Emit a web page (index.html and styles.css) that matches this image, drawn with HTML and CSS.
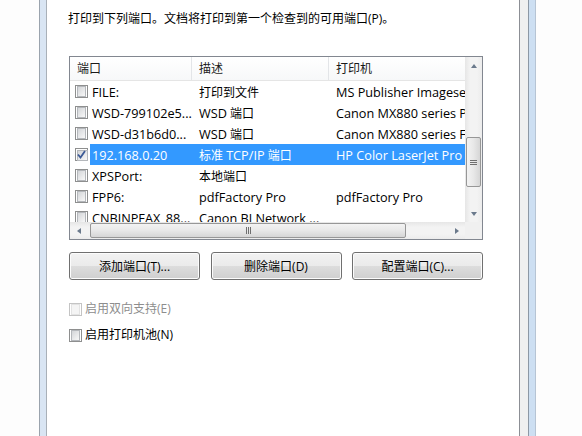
FILE: index.html
```html
<!DOCTYPE html>
<html lang="zh-CN">
<head>
<meta charset="utf-8">
<title>端口</title>
<link rel="stylesheet" href="styles.css">
</head>
<body>
<div class="screen">
  <div class="gutter-left"></div>
  <div class="frame-left"></div>
  <div class="panel">
    <p class="intro">打印到下列端口。文档将打印到第一个检查到的可用端口(P)。</p>
    <div class="listbox">
      <div class="list-top">
        <div class="list-view">
          <div class="header">
            <div class="hcell h1">端口</div>
            <div class="hcell h2">描述</div>
            <div class="hcell h3">打印机</div>
          </div>
          <div class="rows">
            <div class="row"><span class="cb-cell"><span class="cb"></span></span><span class="cells"><span class="c1"><span class="l">FILE:</span></span><span class="c2">打印到文件</span><span class="c3"><span class="l">MS Publisher Imagesetter</span></span></span></div>
            <div class="row"><span class="cb-cell"><span class="cb"></span></span><span class="cells"><span class="c1"><span class="l">WSD-799102e5...</span></span><span class="c2"><span class="l">WSD</span> 端口</span><span class="c3"><span class="l">Canon MX880 series Printer</span></span></span></div>
            <div class="row"><span class="cb-cell"><span class="cb"></span></span><span class="cells"><span class="c1"><span class="l">WSD-d31b6d0...</span></span><span class="c2"><span class="l">WSD</span> 端口</span><span class="c3"><span class="l">Canon MX880 series FAX</span></span></span></div>
            <div class="row"><span class="cb-cell"><span class="cb checked"><svg viewBox="0 0 9 9" width="9" height="9"><path d="M1 4.5 L3.5 7.5 L8 1" fill="none" stroke="#3c5a96" stroke-width="1.8"/></svg></span></span><span class="cells selected"><span class="c1"><span class="l">192.168.0.20</span></span><span class="c2">标准 <span class="l">TCP/IP</span> 端口</span><span class="c3"><span class="l">HP Color LaserJet Pro MFP</span></span></span></div>
            <div class="row"><span class="cb-cell"><span class="cb"></span></span><span class="cells"><span class="c1"><span class="l">XPSPort:</span></span><span class="c2">本地端口</span><span class="c3"></span></span></div>
            <div class="row"><span class="cb-cell"><span class="cb"></span></span><span class="cells"><span class="c1"><span class="l">FPP6:</span></span><span class="c2"><span class="l">pdfFactory Pro</span></span><span class="c3"><span class="l">pdfFactory Pro</span></span></span></div>
            <div class="row"><span class="cb-cell"><span class="cb"></span></span><span class="cells"><span class="c1"><span class="l">CNBJNPFAX_88...</span></span><span class="c2"><span class="l">Canon BJ Network ...</span></span><span class="c3"></span></span></div>
          </div>
        </div>
        <div class="vscroll">
          <div class="sbtn"><span class="arr up"></span></div>
          <div class="vtrack"><div class="vthumb"><span class="grip-h"></span></div></div>
          <div class="sbtn"><span class="arr down"></span></div>
        </div>
      </div>
      <div class="list-bottom">
        <div class="hscroll">
          <div class="sbtn"><span class="arr left"></span></div>
          <div class="htrack"><div class="hthumb"><span class="grip-v"></span></div></div>
          <div class="sbtn"><span class="arr right"></span></div>
        </div>
        <div class="corner"></div>
      </div>
    </div>
    <div class="buttons">
      <button class="btn">添加端口(T)...</button>
      <button class="btn">删除端口(D)</button>
      <button class="btn">配置端口(C)...</button>
    </div>
    <label class="check disabled"><span class="cb"></span><span>启用双向支持(E)</span></label>
    <label class="check"><span class="cb"></span><span>启用打印机池(N)</span></label>
  </div>
  <div class="frame-right-gray"></div>
  <div class="frame-right"></div>
  <div class="gutter-right"></div>
</div>
</body>
</html>
```

FILE: styles.css
```css
* { box-sizing: border-box; }
html, body { margin: 0; padding: 0; }
body {
  background: #ffffff;
  font-family: "Open Sans", "Noto Sans CJK SC", sans-serif;
  font-size: 12px;
  color: #000;
  overflow: hidden;
}
.screen { display: flex; height: 436px; width: 582px; }
.gutter-left { width: 39px; background: #fdfdfd; }
.frame-left {
  width: 8px;
  background: #d9e5f3;
  border-left: 1px solid #9aa3ad;
  border-right: 1px solid #a9b0b8;
}
.panel {
  width: 473px;
  background: #ffffff;
  border-right: 1px solid #8c8f95;
  padding: 11px 0 0 22px;
  display: flex;
  flex-direction: column;
  align-items: flex-start;
}
.frame-right-gray { width: 8px; background: #f0f0f0; }
.frame-right {
  width: 8px;
  background: #cddff2;
  border-left: 1px solid #8d98a5;
  border-right: 1px solid #b6c4d4;
}
.gutter-right { flex: 1; background: #fdfdfd; }

.intro {
  margin: 0 0 29px -1px;
  line-height: 16px;
  white-space: nowrap;
  color: #000;
}

.listbox {
  width: 414px;
  height: 184px;
  border: 1px solid #828790;
  display: flex;
  flex-direction: column;
  background: #fff;
}
.list-top { display: flex; height: 165px; }
.list-view { width: 395px; overflow: hidden; display: flex; flex-direction: column; }
.header {
  display: flex;
  height: 24px;
  flex: none;
  background: linear-gradient(#ffffff, #f7f8f9);
  border-bottom: 1px solid #e5e5e5;
}
.hcell {
  padding-left: 7px;
  line-height: 23px;
  color: #1a1a1a;
  white-space: nowrap;
}
.h1 { width: 122px; border-right: 1px solid #e3e5e8; }
.h2 { width: 137px; border-right: 1px solid #e3e5e8; }
.h3 { flex: 1; }

.rows { flex: 1; overflow: hidden; }
.row { display: flex; height: 21px; align-items: center; }
.cb-cell { width: 20px; padding-left: 5px; display: flex; align-items: center; }
.cells {
  flex: 1;
  min-width: 0;
  height: 100%;
  display: flex;
  align-items: center;
  white-space: nowrap;
}
.cells.selected { background: #3399ff; color: #fff; }
.c1 { width: 102px; padding-left: 2px; flex: none; overflow: hidden; }
.c2 { width: 137px; padding-left: 7px; flex: none; overflow: hidden; }
.c3 { flex: 1; min-width: 0; padding-left: 7px; overflow: hidden; }
.l { font-size: 12.7px; }

.cb {
  width: 13px;
  height: 13px;
  flex: none;
  border: 1px solid #8e8f8f;
  background: #fff;
  padding: 1px;
  display: flex;
  align-items: center;
  justify-content: center;
  position: relative;
}
.cb::before {
  content: "";
  width: 9px;
  height: 9px;
  border: 1px solid #b4b7bb;
  background: linear-gradient(135deg, #d3d5d8, #f8f8f8);
}
.cb.checked::before { position: absolute; left: 1px; top: 1px; }
.cb.checked svg { position: relative; }

.vscroll {
  width: 17px;
  display: flex;
  flex-direction: column;
  background: linear-gradient(90deg, #e6e6e6, #f3f3f3 30%, #f3f3f3 70%, #ececec);
}
.sbtn {
  width: 17px;
  height: 17px;
  flex: none;
  display: flex;
  align-items: center;
  justify-content: center;
}
.vtrack { flex: 1; padding: 63px 1px 0 1px; }
.vthumb {
  height: 50px;
  border: 1px solid #979797;
  border-radius: 2px;
  background: linear-gradient(90deg, #f3f3f3, #e8e8e8 50%, #d6d6d6);
  display: flex;
  align-items: center;
  justify-content: center;
}
.grip-h {
  width: 7px;
  height: 5px;
  border-top: 1px solid #6f6f6f;
  border-bottom: 1px solid #6f6f6f;
  position: relative;
}
.grip-h::after {
  content: "";
  position: absolute;
  left: 0; right: 0; top: 1px;
  border-top: 1px solid #6f6f6f;
}

.list-bottom { display: flex; height: 17px; }
.hscroll {
  width: 395px;
  display: flex;
  background: linear-gradient(#e6e6e6, #f3f3f3 30%, #f3f3f3 70%, #ececec);
}
.htrack { flex: 1; padding: 1px 0 1px 3px; }
.hthumb {
  width: 316px;
  height: 15px;
  border: 1px solid #979797;
  border-radius: 2px;
  background: linear-gradient(#f3f3f3, #e8e8e8 50%, #d6d6d6);
  display: flex;
  align-items: center;
  justify-content: center;
}
.grip-v {
  width: 5px;
  height: 7px;
  border-left: 1px solid #6f6f6f;
  border-right: 1px solid #6f6f6f;
  position: relative;
}
.grip-v::after {
  content: "";
  position: absolute;
  top: 0; bottom: 0; left: 1px;
  border-left: 1px solid #6f6f6f;
}
.corner { flex: 1; background: #f0f0f0; }

.arr { width: 0; height: 0; border: 3px solid transparent; }
.arr.up { border-bottom: 4px solid #6b7a8c; border-top-width: 0; }
.arr.down { border-top: 4px solid #6b7a8c; border-bottom-width: 0; }
.arr.left { border-right: 4px solid #6b7a8c; border-left-width: 0; }
.arr.right { border-left: 4px solid #6b7a8c; border-right-width: 0; }

.buttons {
  width: 414px;
  margin-top: 12px;
  display: flex;
  justify-content: space-between;
}
.btn {
  width: 131px;
  height: 28px;
  border: 1px solid #707070;
  border-radius: 3px;
  background: linear-gradient(#f2f2f2, #ebebeb 49%, #dddddd 50%, #cfcfcf);
  box-shadow: inset 0 0 0 1px #fcfcfc;
  font: inherit;
  color: #000;
  padding: 0;
}

.check {
  display: flex;
  align-items: center;
  gap: 3px;
  line-height: 16px;
  margin-top: 10px;
}
.buttons + .check { margin-top: 21px; }
.check.disabled { color: #8d8d8d; }
.check.disabled .cb { border-color: #c4c4c4; }
.check.disabled .cb::before { border-color: #e3e3e3; background: #f4f4f4; }
```
